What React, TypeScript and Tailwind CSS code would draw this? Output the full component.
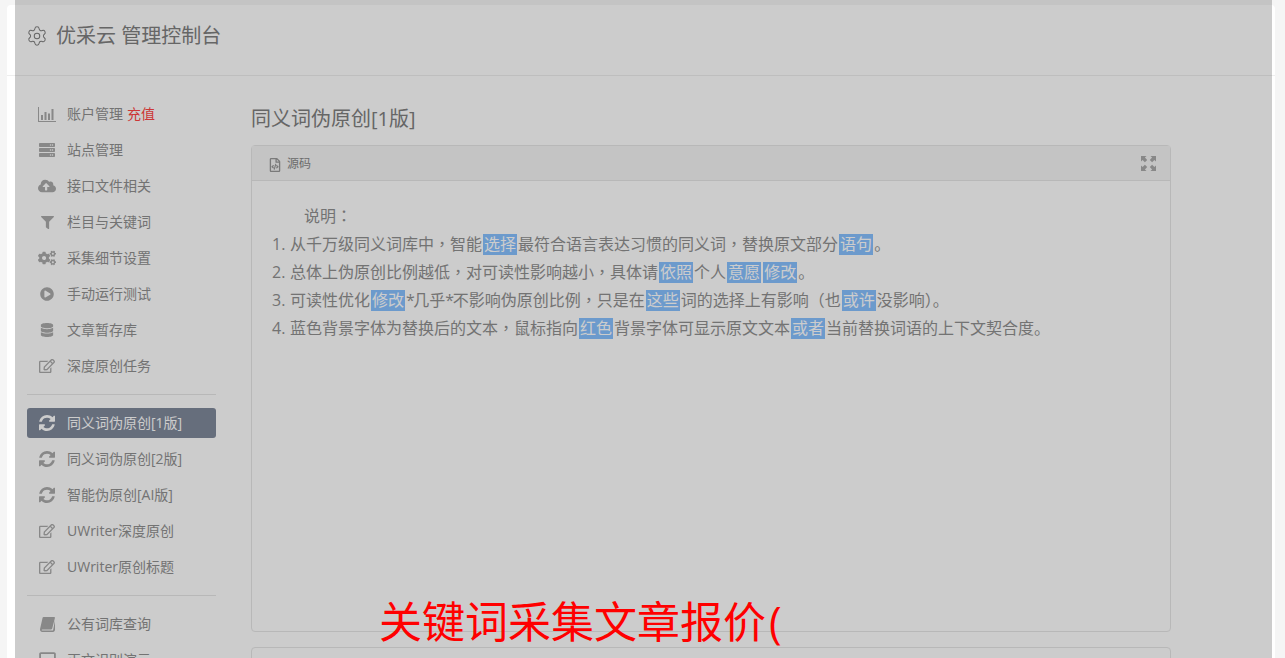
import type { ReactNode } from "react";
import { Settings } from "lucide-react";
import {
  FaCloudUploadAlt,
  FaCogs,
  FaDatabase,
  FaFilter,
  FaPlayCircle,
  FaRegEdit,
  FaRegFileCode,
  FaRegSquare,
  FaServer,
} from "react-icons/fa";

const font = "font-['Open_Sans','Noto_Sans_CJK_SC',sans-serif]";

function ChartIcon() {
  return (
    <svg width="18" height="15" viewBox="0 0 18 15" fill="currentColor">
      <path d="M0 0h1v14h17v1H0z" />
      <rect x="3" y="8" width="2" height="5" />
      <rect x="6.5" y="5" width="2" height="8" />
      <rect x="10" y="6.5" width="2" height="6.5" />
      <rect x="13.5" y="2" width="2" height="11" />
    </svg>
  );
}

function ExpandIcon() {
  return (
    <svg width="15" height="15" viewBox="0 0 15 15" fill="currentColor">
      <path d="M0 0h5.5L3.9 1.6 6.2 3.9 3.9 6.2 1.6 3.9 0 5.5z" />
      <path d="M15 0v5.5l-1.6-1.6-2.3 2.3-2.3-2.3 2.3-2.3L9.5 0z" />
      <path d="M0 15V9.5l1.6 1.6 2.3-2.3 2.3 2.3-2.3 2.3L5.5 15z" />
      <path d="M15 15H9.5l1.6-1.6-2.3-2.3 2.3-2.3 2.3 2.3L15 9.5z" />
    </svg>
  );
}

function RefreshIcon() {
  return (
    <svg width="16" height="16" viewBox="128 128 1536 1536" fill="currentColor">
      <path d="M1639 1056q0 5-1 7-64 268-268 434.5t-478 166.5q-146 0-282.5-55t-243.5-157l-129 129q-19 19-45 19t-45-19-19-45v-448q0-26 19-45t45-19h448q26 0 45 19t19 45-19 45l-137 137q71 66 161 102t187 36q134 0 250-65t186-179q11-17 53-117 8-23 30-23h192q13 0 22.5 9.5t9.5 22.5zm25-800v448q0 26-19 45t-45 19h-448q-26 0-45-19t-19-45 19-45l138-138q-148-137-349-137-134 0-250 65t-186 179q-11 17-53 117-8 23-30 23h-199q-13 0-22.5-9.5t-9.5-22.5v-7q65-268 270-434.5t480-166.5q146 0 284 55.5t245 156.5l130-129q19-19 45-19t45 19 19 45z" />
    </svg>
  );
}

function BookIcon() {
  return (
    <svg width="15" height="15" viewBox="0 0 15 15" fill="currentColor">
      <path d="M3.6 0H14.2c.6 0 .9.5.7 1l-2.7 10.6c-.1.5-.5.8-1 .8H2.3c-.6 0-.9.7-.4 1 .2.1.4.2.7.2h9.9c.3 0 .5-.2.6-.4L15 3.6v9.2c0 1.2-.9 2.2-2 2.2H2.4C1 15 0 13.9 0 12.6c0-.3 0-.6.1-.9L2.6.8C2.7.3 3.1 0 3.6 0z" />
    </svg>
  );
}

type NavItem = { icon: ReactNode; label: string; badge?: string; active?: boolean };

const accountNav: NavItem[] = [
  { icon: <ChartIcon />, label: "账户管理", badge: "充值" },
  { icon: <FaServer size={16} />, label: "站点管理" },
  { icon: <FaCloudUploadAlt size={18} />, label: "接口文件相关" },
  { icon: <FaFilter size={13} />, label: "栏目与关键词" },
  { icon: <FaCogs size={18} />, label: "采集细节设置" },
  { icon: <FaPlayCircle size={14} />, label: "手动运行测试" },
  { icon: <FaDatabase size={14} />, label: "文章暂存库" },
  { icon: <FaRegEdit size={16} />, label: "深度原创任务" },
];

const rewriteNav: NavItem[] = [
  { icon: <RefreshIcon />, label: "同义词伪原创[1版]", active: true },
  { icon: <RefreshIcon />, label: "同义词伪原创[2版]" },
  { icon: <RefreshIcon />, label: "智能伪原创[AI版]" },
  { icon: <FaRegEdit size={16} />, label: "UWriter深度原创" },
  { icon: <FaRegEdit size={16} />, label: "UWriter原创标题" },
];

const toolNav: NavItem[] = [
  { icon: <BookIcon />, label: "公有词库查询" },
  { icon: <FaRegSquare size={19} />, label: "正文识别演示" },
];

function NavGroup({ items }: { items: NavItem[] }) {
  return (
    <ul className="flex flex-col gap-1.5">
      {items.map((item) => (
        <li
          key={item.label}
          className={
            item.active
              ? "flex h-[30px] items-center rounded-[3px] bg-[#808a9c] text-[14px] text-white"
              : "flex h-[30px] items-center text-[14px] text-[#909090]"
          }
        >
          <span
            className={
              item.active
                ? "flex w-10 justify-center text-white"
                : "flex w-10 justify-center text-[#aaa]"
            }
          >
            {item.icon}
          </span>
          <span className="pb-0.5">{item.label}</span>
          {item.badge && <span className="ml-1 pb-0.5 text-[#f44]">{item.badge}</span>}
        </li>
      ))}
    </ul>
  );
}

function Hl({ children }: { children: ReactNode }) {
  return (
    <span className="mx-px inline-block bg-[#87c1ff] px-px align-baseline leading-[21px] text-white">
      {children}
    </span>
  );
}

// commas and brackets sit in the middle of their cell in the reference
function Pu({ children }: { children: ReactNode }) {
  return <span className="font-['Noto_Sans_CJK_TC',sans-serif] leading-none">{children}</span>;
}

function Star() {
  return <span className="tracking-[-1.5px]">*</span>;
}

function Note({ n, children }: { n: number; children: ReactNode }) {
  return (
    <p className="flex">
      <span className="w-[18px] shrink-0">{n}.</span>
      <span>{children}</span>
    </p>
  );
}

export default function App() {
  return (
    <div className={`relative h-[658px] overflow-hidden bg-[#f5f5f5] pl-[7px] pr-[10px] pt-[5px] ${font}`}>
      <div className="h-full rounded-t-[4px] bg-white">
        <header className="flex h-[71px] items-center border-b border-[#eee] pb-2 pl-[19px] text-[20px] text-[#808080]">
          <Settings size={22} strokeWidth={1.1} />
          <span className="ml-2">优采云 管理控制台</span>
        </header>

        <div className="flex">
          <aside className="ml-5 w-[189px] shrink-0 pt-[23px]">
            <NavGroup items={accountNav} />
            <hr className="my-[13px] border-[#e7e7e7]" />
            <NavGroup items={rewriteNav} />
            <hr className="my-[13px] border-[#e7e7e7]" />
            <NavGroup items={toolNav} />
          </aside>

          <main className="ml-[35px] w-[920px] shrink-0 pt-[29px]">
            <h1 className="mb-3 text-[20px] leading-7 text-[#808080]">同义词伪原创[1版]</h1>

            <section className="h-[487px] rounded-[4px] border border-[#e7e7e7]">
              <div className="flex h-[35px] items-center justify-between border-b border-[#e7e7e7] bg-[#f5f5f5] pl-4 pr-[14px] text-[12px] text-[#888]">
                <span className="flex items-center gap-[5px] pt-0.5">
                  <FaRegFileCode size={14} className="mt-0.5 text-[#999]" />
                  源码
                </span>
                <span className="text-[#aaa]">
                  <ExpandIcon />
                </span>
              </div>

              <div className="pl-5 pt-[21px] text-[16px] leading-7 text-[#909090]">
                <p className="pl-8">
                  说明<Pu>：</Pu>
                </p>
                <Note n={1}>
                  从千万级同义词库中<Pu>，</Pu>智能<Hl>选择</Hl>最符合语言表达习惯的同义词<Pu>，</Pu>替换原文部分<Hl>语句</Hl>。
                </Note>
                <Note n={2}>
                  总体上伪原创比例越低<Pu>，</Pu>对可读性影响越小<Pu>，</Pu>具体请<Hl>依照</Hl>个人<Hl>意愿</Hl>
                  <Hl>修改</Hl>。
                </Note>
                <Note n={3}>
                  可读性优化<Hl>修改</Hl>
                  <Star />几乎<Star />不影响伪原创比例<Pu>，</Pu>只是在<Hl>这些</Hl>词的选择上有影响<Pu>（</Pu>也<Hl>或许</Hl>没影响<Pu>）</Pu>。
                </Note>
                <Note n={4}>
                  蓝色背景字体为替换后的文本<Pu>，</Pu>鼠标指向<Hl>红色</Hl>背景字体可显示原文文本<Hl>或者</Hl>当前替换词语的上下文契合度。
                </Note>
              </div>
            </section>

            <section className="mt-[15px] h-[200px] rounded-[4px] border border-[#e7e7e7]" />
          </main>
        </div>
      </div>

      {/* dimming layer of the open dialog, with its title on top */}
      <div className="absolute bottom-0 left-[15px] right-[13px] top-0 bg-black/20" />
      <div className="absolute left-[379px] top-[594px] text-[43px] leading-[56px] text-[#ff0000]">
        关键词采集文章报价<span className="ml-[3px]">(</span>
      </div>
    </div>
  );
}
